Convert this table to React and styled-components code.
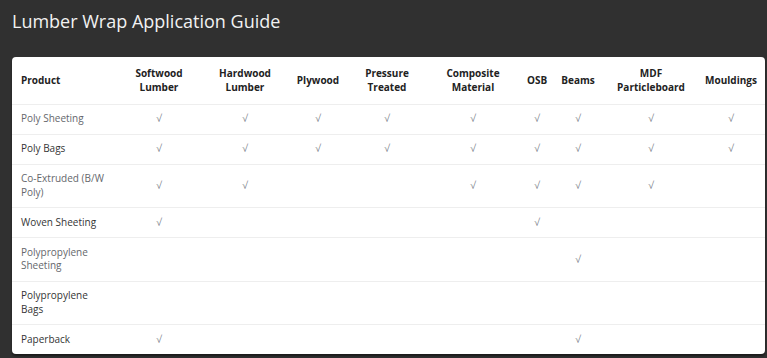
import React from 'react';
import styled, { createGlobalStyle } from 'styled-components';

const GlobalStyle = createGlobalStyle`
  html, body {
    margin: 0;
    padding: 0;
    background-color: #303030;
  }
  body {
    font-family: 'Open Sans', 'Noto Sans', Arial, sans-serif;
  }
`;

const Page = styled.div`
  width: 767px;
  height: 358px;
  overflow: hidden;
  padding: 0 2px 4px 12px;
  box-sizing: border-box;
  display: flex;
  flex-direction: column;
`;

const Title = styled.h1`
  margin: 0;
  padding-top: 8px;
  height: 57px;
  flex-shrink: 0;
  box-sizing: border-box;
  font-size: 18px;
  line-height: 26px;
  font-weight: 400;
  color: #f2f2f2;
`;

const Card = styled.div`
  flex: 1;
  background-color: #ffffff;
  border-radius: 4px;
  overflow: hidden;
  box-shadow: 0 2px 2px rgba(0, 0, 0, 0.45);
`;

const Table = styled.table`
  width: 100%;
  border-collapse: collapse;
  table-layout: fixed;
  font-size: 10px;
  line-height: 13.5px;
`;

const HeadCell = styled.th`
  height: 47px;
  padding: 0 4px;
  box-sizing: border-box;
  font-weight: 700;
  line-height: 14px;
  color: #222222;
  text-align: ${(p) => (p.$left ? 'left' : 'center')};
  padding-left: ${(p) => (p.$left ? '9px' : '4px')};
  vertical-align: middle;
  border-bottom: 1px solid #eeeeee;
`;

const Row = styled.tr`
  color: ${(p) => (p.$muted ? '#65676c' : '#343434')};
  border-bottom: 1px solid #eeeeee;
  &:last-child {
    border-bottom: none;
  }
`;

const NameCell = styled.td`
  padding: 7.75px 9px;
  vertical-align: middle;
`;

const CheckCell = styled.td`
  padding: 7.75px 0;
  text-align: center;
  vertical-align: middle;
  color: #80848c;
`;

const columns = [
  { label: 'Product', width: 101 },
  { label: ['Softwood', 'Lumber'], width: 92 },
  { label: ['Hardwood', 'Lumber'], width: 80 },
  { label: ['Plywood'], width: 66 },
  { label: ['Pressure', 'Treated'], width: 72 },
  { label: ['Composite', 'Material'], width: 100 },
  { label: ['OSB'], width: 28 },
  { label: ['Beams'], width: 54 },
  { label: ['MDF', 'Particleboard'], width: 92 },
  { label: ['Mouldings'], width: 68 },
];

const rows = [
  { name: 'Poly Sheeting', checks: [1, 1, 1, 1, 1, 1, 1, 1, 1] },
  { name: 'Poly Bags', checks: [1, 1, 1, 1, 1, 1, 1, 1, 1] },
  { name: 'Co-Extruded (B/W Poly)', checks: [1, 1, 0, 0, 1, 1, 1, 1, 0] },
  { name: 'Woven Sheeting', checks: [1, 0, 0, 0, 0, 1, 0, 0, 0] },
  { name: 'Polypropylene Sheeting', checks: [0, 0, 0, 0, 0, 0, 1, 0, 0] },
  { name: 'Polypropylene Bags', checks: [0, 0, 0, 0, 0, 0, 0, 0, 0] },
  { name: 'Paperback', checks: [1, 0, 0, 0, 0, 0, 1, 0, 0] },
];

const App = () => (
  <Page>
    <GlobalStyle />
    <Title>Lumber Wrap Application Guide</Title>
    <Card>
      <Table>
        <colgroup>
          {columns.map((col, i) => (
            <col key={i} style={{ width: `${col.width}px` }} />
          ))}
        </colgroup>
        <thead>
          <tr>
            {columns.map((col, i) => (
              <HeadCell key={i} $left={i === 0}>
                {Array.isArray(col.label)
                  ? col.label.map((part, j) => (
                      <React.Fragment key={j}>
                        {j > 0 && <br />}
                        {part}
                      </React.Fragment>
                    ))
                  : col.label}
              </HeadCell>
            ))}
          </tr>
        </thead>
        <tbody>
          {rows.map((row, i) => (
            <Row key={row.name} $muted={i % 2 === 0 && i < 6}>
              <NameCell>{row.name}</NameCell>
              {row.checks.map((c, j) => (
                <CheckCell key={j}>{c ? '√' : ''}</CheckCell>
              ))}
            </Row>
          ))}
        </tbody>
      </Table>
    </Card>
  </Page>
);

export default App;
